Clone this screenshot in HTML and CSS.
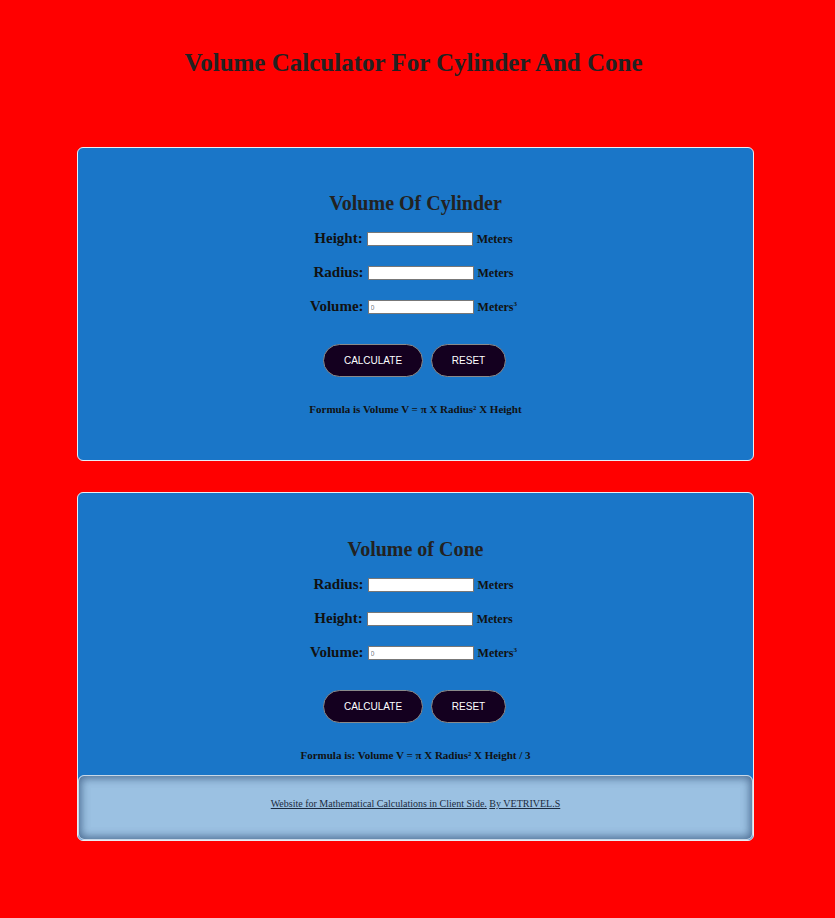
FILE: index.html
```
<!DOCTYPE html>
<html>
<head>
<meta charset="utf-8">
<title>Volume Calculator</title>
<link rel="stylesheet" href="styles.css">
</head>
<body>
<h1 class="title">Volume Calculator For Cylinder And Cone</h1>

<section class="card card-cyl">
  <h2 class="card-title">Volume Of Cylinder</h2>
  <div class="row"><label class="lbl">Height:</label> <input class="field" type="text"> <span class="unit">Meters</span></div>
  <div class="row"><label class="lbl">Radius:</label> <input class="field" type="text"> <span class="unit">Meters</span></div>
  <div class="row"><label class="lbl">Volume:</label> <input class="field" type="text" value="0"> <span class="unit">Meters<sup>3</sup></span></div>
  <div class="actions">
    <button class="btn btn-calc">CALCULATE</button>
    <button class="btn btn-reset">RESET</button>
  </div>
  <p class="formula">Formula is Volume V = π X Radius² X Height</p>
</section>

<section class="card card-cone">
  <h2 class="card-title">Volume of Cone</h2>
  <div class="row"><label class="lbl">Radius:</label> <input class="field" type="text"> <span class="unit">Meters</span></div>
  <div class="row"><label class="lbl">Height:</label> <input class="field" type="text"> <span class="unit">Meters</span></div>
  <div class="row"><label class="lbl">Volume:</label> <input class="field" type="text" value="0"> <span class="unit">Meters<sup>3</sup></span></div>
  <div class="actions">
    <button class="btn btn-calc">CALCULATE</button>
    <button class="btn btn-reset">RESET</button>
  </div>
  <p class="formula">Formula is: Volume V = π X Radius² X Height / 3</p>
  <footer class="footer">
    <a href="#" class="flink">Website for Mathematical Calculations in Client Side.</a> <a href="#" class="flink">By VETRIVEL.S</a>
  </footer>
</section>
</body>
</html>
```
FILE: styles.css
```
html, body {
  margin: 0;
  padding: 0;
}
body {
  background: #ff0000;
  font-family: "Liberation Serif", "Times New Roman", serif;
  min-height: 918px;
}
.title {
  margin: 0;
  padding: 48px 8px 0 0;
  text-align: center;
  font-size: 25px;
  font-weight: bold;
  color: #222;
  line-height: 30px;
}
.card {
  width: 675px;
  margin: 69px auto 0 77px;
  background: #1a76c8;
  border: 1px solid #e8eef5;
  border-radius: 6px;
  text-align: center;
  box-sizing: content-box;
}
.card-cyl {
  height: 312px;
}
.card-cone {
  margin-top: 31px;
}
.card-title {
  margin: 0;
  padding-top: 43px;
  font-size: 20px;
  line-height: 24px;
  color: #222;
  font-weight: bold;
}
.card-cone .card-title {
  padding-top: 44px;
}
.row {
  margin-top: 10px;
  height: 24px;
  line-height: 24px;
  padding-right: 4px;
}
.card-title + .row {
  margin-top: 11px;
}
.lbl {
  font-size: 15px;
  font-weight: bold;
  color: #111;
}
.field {
  width: 100px;
  height: 10px;
  padding: 1px 2px;
  border: 1px solid #777;
  font-size: 7px;
  font-family: "Liberation Sans", Arial, sans-serif;
  color: #777;
  background: #fff;
  vertical-align: middle;
  margin: 0;
}
.unit {
  font-size: 12px;
  font-weight: bold;
  color: #111;
}
.unit sup {
  font-size: 7px;
  line-height: 0;
  vertical-align: 5px;
}
.actions {
  margin-top: 26px;
  display: flex;
  justify-content: center;
  gap: 8px;
  padding-right: 2px;
}
.btn {
  height: 33px;
  border-radius: 17px;
  background: #14001f;
  border: 1px solid #8a8a8a;
  color: #fff;
  font-family: "Liberation Sans", Arial, sans-serif;
  font-size: 10px;
  cursor: pointer;
}
.btn-calc {
  width: 100px;
}
.btn-reset {
  width: 75px;
}
.formula {
  margin: 25px 0 0;
  font-size: 11px;
  font-weight: bold;
  color: #111;
  line-height: 14px;
}
.footer {
  margin-top: 13px;
  height: 63px;
  line-height: 56px;
  background: #9bc1e2;
  border: 1px solid #c8d8e8;
  border-radius: 6px;
  box-shadow: inset 0 0 8px 2px rgba(40, 70, 110, 0.7);
  font-size: 10px;
}
.flink {
  color: #1c2b40;
  text-decoration: underline;
}
```
